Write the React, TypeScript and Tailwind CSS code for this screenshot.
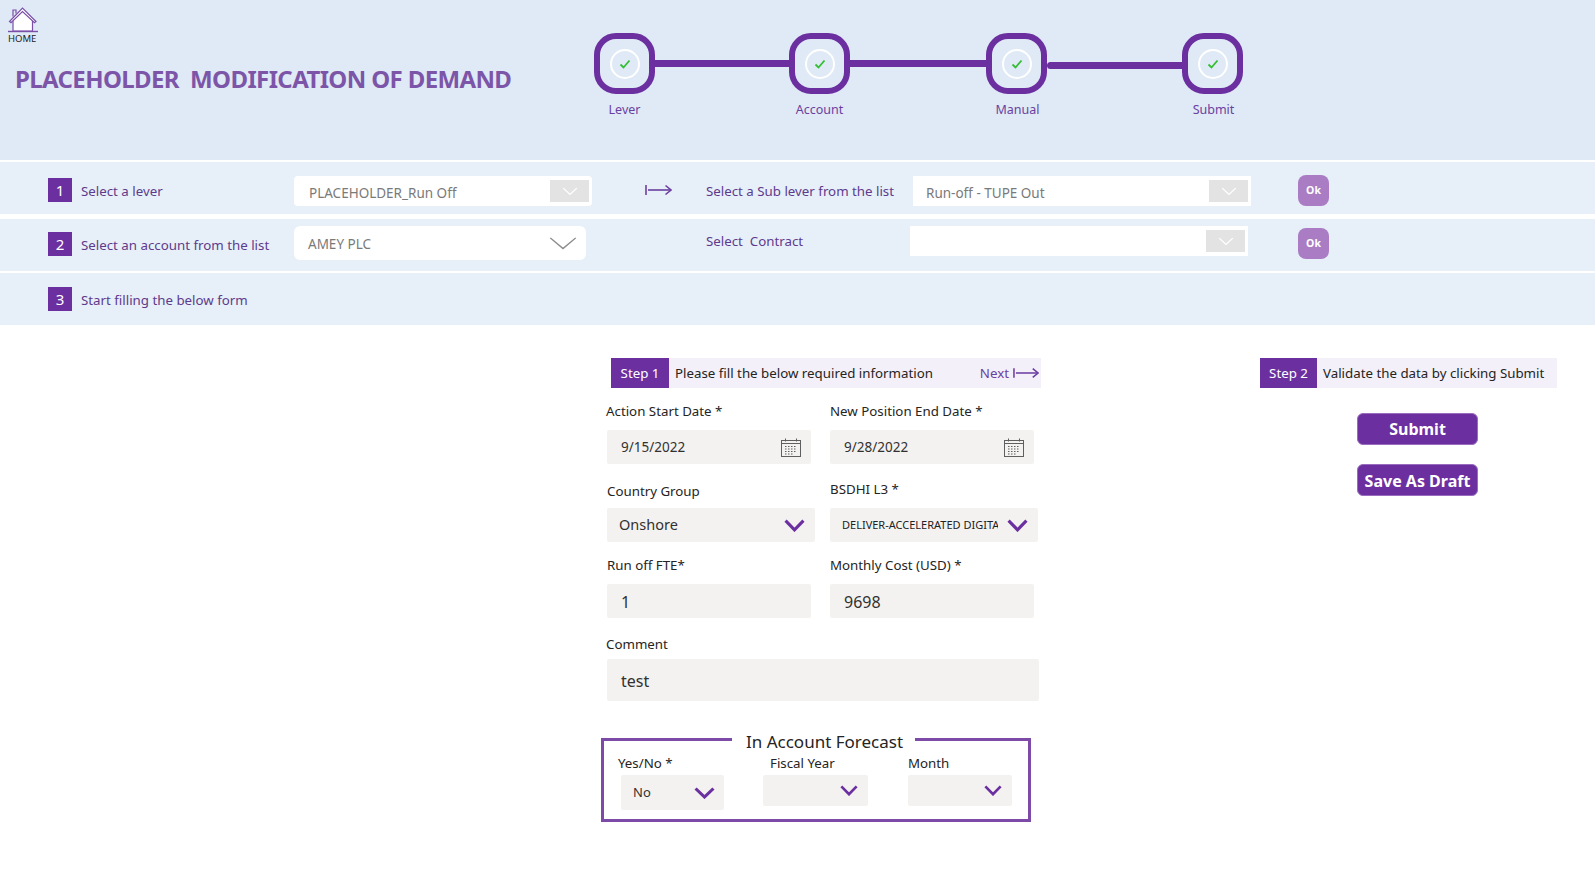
import React from 'react';

const font = { fontFamily: '"Noto Sans", "Open Sans", sans-serif' };

// Small drawings
function BarArrow({ className }: { className?: string }) {
  return (
    <svg className={className} viewBox="0 0 27 12" fill="none" stroke="currentColor" strokeWidth={1.6}>
      <path d="M1 1v10" />
      <path d="M3 6h23" />
      <path d="M20.5 1.5L26 6l-5.5 4.5" />
    </svg>
  );
}

function Chevron({ className, strokeWidth = 3 }: { className?: string; strokeWidth?: number }) {
  return (
    <svg className={className} viewBox="0 0 20 12" fill="none" stroke="currentColor" strokeWidth={strokeWidth} preserveAspectRatio="none">
      <path d="M1.5 1.5L10 10l8.5-8.5" />
    </svg>
  );
}

function CalendarIcon() {
  return (
    <svg className="h-[19px] w-[20px] text-[#5f5f5f]" viewBox="0 0 20 19" fill="none" stroke="currentColor" strokeWidth={1}>
      <rect x="0.5" y="2.5" width="19" height="16" />
      <path d="M0.5 5.5h19M4.5 0.5v3M15.5 0.5v3" />
      <path d="M4 8.5h12M4 11h12M4 13.5h12M4 16h8" strokeDasharray="1.5 1.5" />
    </svg>
  );
}

function HomeIcon() {
  return (
    <svg className="h-[26px] w-[30px]" viewBox="0 0 30 26" fill="none" stroke="#7b4fa8" strokeWidth={1.2}>
      <path d="M5 24V12L14.5 4 24.5 12V24z" fill="#fff" />
      <path d="M1.5 14.5L14.5 1 28 14.5l-1.5 1.2L14.5 4.5 3 15.7z" fill="#fff" />
      <path d="M5 9.5V3h3v3.5" />
      <path d="M0 24.5h30" strokeWidth={1.4} />
    </svg>
  );
}

function Step({ label, shift }: { label: string; shift?: string }) {
  return (
    <div className="relative flex h-[61px] w-[61px] shrink-0 items-center justify-center rounded-[22px] border-[6px] border-[#6b2fa0]">
      <div className="flex h-[30px] w-[30px] items-center justify-center rounded-full border-2 border-white">
        <svg className="h-[12px] w-[12px] text-[#35bd35]" viewBox="0 0 12 12" fill="none" stroke="currentColor" strokeWidth={1.8}>
          <path d="M1.5 6.5L4.5 9.5 10.5 2.5" />
        </svg>
      </div>
      <span className={`absolute top-[62px] whitespace-nowrap text-[12.5px] text-[#6b3fa0] ${shift ?? ''}`}>{label}</span>
    </div>
  );
}

function NumBox({ n }: { n: number }) {
  return (
    <div className="flex h-[24px] w-[24px] shrink-0 items-center justify-center bg-[#6b2fa0] text-[15px] text-white">{n}</div>
  );
}

function OkButton() {
  return (
    <div className="flex h-[31px] w-[31px] items-center justify-center rounded-[8px] bg-[#a97cc4] text-[10.5px] font-bold text-white">Ok</div>
  );
}

function GrayBoxChevron() {
  return (
    <div className="flex h-[22px] w-[39px] items-center justify-center bg-[#e3e3e3] text-white">
      <Chevron className="h-[9px] w-[16px]" strokeWidth={1.6} />
    </div>
  );
}

function FieldLabel({ children, className }: { children: React.ReactNode; className?: string }) {
  return <div className={`flex h-[20px] items-center whitespace-nowrap pt-[2px] text-[13.3px] text-[#252423] ${className ?? ''}`}>{children}</div>;
}

function InputBox({ children, className }: { children?: React.ReactNode; className?: string }) {
  return <div className={`flex items-center rounded-[2px] bg-[#f3f2f1] text-[#323130] ${className ?? ''}`}>{children}</div>;
}

function PurpleChevron({ className }: { className: string }) {
  return <Chevron className={`text-[#6b2fa0] ${className}`} />;
}

export default function App() {
  return (
    <div className="min-h-[894px] w-[1595px] overflow-hidden bg-white" style={font}>
      {/* Header */}
      <div className="flex h-[160px] bg-[#dfeaf6]">
        <div className="w-[594px] shrink-0">
          <div className="ml-[8px] mt-[7px] flex w-[30px] flex-col">
            <HomeIcon />
            <span className="text-[9.5px] leading-[11px] text-[#222]">HOME</span>
          </div>
          <h1 className="ml-[15px] mt-[19px] whitespace-nowrap text-[24px] font-bold leading-[32px] tracking-[-0.63px] text-[#7d55a8]">
            PLACEHOLDER&nbsp; MODIFICATION OF DEMAND
          </h1>
        </div>
        <div className="mt-[33px] flex h-[61px] items-start">
          <Step label="Lever" />
          <div className="mt-[27px] h-[7px] w-[134px] bg-[#6b2fa0]" />
          <Step label="Account" />
          <div className="mt-[27px] h-[7px] w-[136px] bg-[#6b2fa0]" />
          <Step label="Manual" shift="translate-x-[1px]" />
          <div className="mt-[29px] h-[7px] w-[135px] rounded-l-full bg-[#6b2fa0]" />
          <Step label="Submit" shift="translate-x-[1px]" />
        </div>
      </div>

      {/* Row 1 */}
      <div className="mt-[2px] flex h-[52px] bg-[#e7f0f9] text-[13.3px] text-[#5e3a8c]">
        <div className="ml-[48px] mt-[16px] flex h-[24px] w-[246px] items-center gap-[9px]">
          <NumBox n={1} />
          <span className="pt-[4px]">Select a lever</span>
        </div>
        <div className="mt-[14px] flex h-[30px] w-[298px] items-center justify-between rounded-[4px] bg-white pl-[15px] pr-[3px]">
          <span className="mt-[4px] text-[13.5px] text-[#7a7a7a]">PLACEHOLDER_Run Off</span>
          <GrayBoxChevron />
        </div>
        <BarArrow className="ml-[53px] mt-[22px] h-[12px] w-[27px] text-[#6b3fa0]" />
        <span className="ml-[34px] mt-[20px] w-[207px] whitespace-nowrap">Select a Sub lever from the list</span>
        <div className="mt-[14px] flex h-[30px] w-[338px] items-center justify-between border-r-2 border-white bg-white pl-[13px] pr-[1px]">
          <span className="mt-[4px] text-[13.5px] text-[#7a7a7a]">Run-off - TUPE Out</span>
          <GrayBoxChevron />
        </div>
        <div className="ml-[47px] mt-[13px]">
          <OkButton />
        </div>
      </div>

      {/* Row 2 */}
      <div className="mt-[5px] flex h-[52px] bg-[#e7f0f9] text-[13.3px] text-[#5e3a8c]">
        <div className="ml-[48px] mt-[13px] flex h-[24px] w-[246px] items-center gap-[9px]">
          <NumBox n={2} />
          <span className="pt-[4px]">Select an account from the list</span>
        </div>
        <div className="mt-[7px] flex h-[34px] w-[292px] items-center justify-between rounded-[6px] bg-white pl-[14px] pr-[8px]">
          <span className="mt-[2px] text-[13.5px] text-[#7a7a7a]">AMEY PLC</span>
          <Chevron className="h-[15px] w-[30px] text-[#8c8c8c]" strokeWidth={1} />
        </div>
        <span className="ml-[120px] mt-[13px] w-[204px] whitespace-nowrap">Select&nbsp; Contract</span>
        <div className="mt-[7px] flex h-[30px] w-[338px] items-center justify-end border-r-2 border-white bg-white pr-[1px]">
          <GrayBoxChevron />
        </div>
        <div className="ml-[50px] mt-[9px]">
          <OkButton />
        </div>
      </div>

      {/* Row 3 */}
      <div className="mt-[2px] flex h-[52px] items-center gap-[9px] bg-[#e7f0f9] pl-[48px] text-[13.3px] text-[#5e3a8c]">
        <NumBox n={3} />
        <span className="pt-[4px]">Start filling the below form</span>
      </div>

      <div className="flex">
        {/* Step 1 form */}
        <div className="ml-[601px] w-[440px] shrink-0 pt-[33px]">
          <div className="ml-[10px] flex h-[30px] w-[430px] items-center bg-[#f3f0f9] text-[13.3px]">
            <div className="flex h-full w-[58px] items-center justify-center bg-[#6b2fa0] pt-[2px] text-white">Step 1</div>
            <span className="ml-[6px] pt-[2px] text-[#252423]">Please fill the below required information</span>
            <span className="ml-auto pt-[2px] text-[#6b3fa0]">Next</span>
            <BarArrow className="ml-[4px] mr-[2px] h-[12px] w-[26px] text-[#6b3fa0]" />
          </div>

          <div className="mt-[13px] flex gap-[19px] pl-[5px]">
            <div className="w-[205px]">
              <FieldLabel>Action Start Date *</FieldLabel>
              <InputBox className="ml-[1px] mt-[9px] h-[34px] w-[204px] justify-between pl-[14px] pr-[10px] text-[13.5px]">
                9/15/2022
                <CalendarIcon />
              </InputBox>
            </div>
            <div className="w-[204px]">
              <FieldLabel>New Position End Date *</FieldLabel>
              <InputBox className="mt-[9px] h-[34px] w-[204px] justify-between pl-[14px] pr-[10px] text-[13.5px]">
                9/28/2022
                <CalendarIcon />
              </InputBox>
            </div>
          </div>

          <div className="mt-[15px] flex gap-[15px] pl-[6px]">
            <div className="w-[208px]">
              <FieldLabel className="mt-[2px]">Country Group</FieldLabel>
              <InputBox className="mt-[7px] h-[34px] justify-between pl-[12px] pr-[10px] text-[14.5px]">
                Onshore
                <PurpleChevron className="h-[13px] w-[21px]" />
              </InputBox>
            </div>
            <div className="w-[208px]">
              <FieldLabel>BSDHI L3 *</FieldLabel>
              <InputBox className="mt-[9px] h-[34px] justify-between pl-[12px] pr-[10px]">
                <span className="w-[156px] overflow-hidden whitespace-nowrap text-[11px] text-[#222]">DELIVER-ACCELERATED DIGITAL</span>
                <PurpleChevron className="h-[13px] w-[21px]" />
              </InputBox>
            </div>
          </div>

          <div className="mt-[13px] flex gap-[19px] pl-[6px]">
            <div className="w-[204px]">
              <FieldLabel>Run off FTE*</FieldLabel>
              <InputBox className="mt-[9px] h-[34px] pl-[14px] pt-[2px] text-[16px]">1</InputBox>
            </div>
            <div className="w-[204px]">
              <FieldLabel>Monthly Cost (USD) *</FieldLabel>
              <InputBox className="mt-[9px] h-[34px] pl-[14px] pt-[2px] text-[16px]">9698</InputBox>
            </div>
          </div>

          <FieldLabel className="ml-[5px] mt-[16px]">Comment</FieldLabel>
          <InputBox className="ml-[6px] mt-[5px] h-[42px] w-[432px] pl-[14px] pt-[2px] text-[16px]">test</InputBox>

          {/* In Account Forecast */}
          <fieldset className="mt-[23px] h-[98px] w-[430px] border-[3px] border-[#7d4aa8]">
            <legend className="ml-[128px] pl-[14px] pr-[12px] pt-[6px] text-[17px] leading-[24px] text-[#252423]">In Account Forecast</legend>
            <div className="flex">
              <div className="ml-[14px] w-[152px]">
                <FieldLabel className="!h-[18px]">Yes/No *</FieldLabel>
                <InputBox className="ml-[3px] mt-[3px] h-[35px] w-[103px] justify-between pl-[12px] pr-[9px] text-[13px]">
                  No
                  <PurpleChevron className="h-[12px] w-[21px]" />
                </InputBox>
              </div>
              <div className="w-[138px]">
                <FieldLabel className="!h-[18px]">Fiscal Year</FieldLabel>
                <InputBox className="-ml-[7px] mt-[3px] h-[31px] w-[105px] justify-end pr-[10px]">
                  <PurpleChevron className="h-[11px] w-[18px]" />
                </InputBox>
              </div>
              <div className="w-[105px]">
                <FieldLabel className="!h-[18px]">Month</FieldLabel>
                <InputBox className="mt-[3px] h-[31px] w-[104px] justify-end pr-[10px]">
                  <PurpleChevron className="h-[11px] w-[18px]" />
                </InputBox>
              </div>
            </div>
          </fieldset>
        </div>

        {/* Step 2 */}
        <div className="ml-[219px] w-[297px] shrink-0 pt-[33px]">
          <div className="flex h-[30px] items-center bg-[#f3f0f9] text-[13.3px]">
            <div className="flex h-full w-[57px] items-center justify-center bg-[#6b2fa0] pt-[2px] text-white">Step 2</div>
            <span className="ml-[6px] pt-[2px] text-[#252423]">Validate the data by clicking Submit</span>
          </div>
          <div className="ml-[97px] mt-[25px] flex w-[121px] flex-col gap-[20px]">
            <div className="flex h-[32px] items-center justify-center rounded-[6px] border border-[#9a6cc0] bg-[#6b2fa0] text-[16px] font-bold text-white">Submit</div>
            <div className="-mt-[1px] flex h-[32px] items-center justify-center whitespace-nowrap rounded-[6px] border border-[#9a6cc0] bg-[#6b2fa0] pt-[2px] text-[16px] font-bold text-white">Save As Draft</div>
          </div>
        </div>
      </div>
    </div>
  );
}
